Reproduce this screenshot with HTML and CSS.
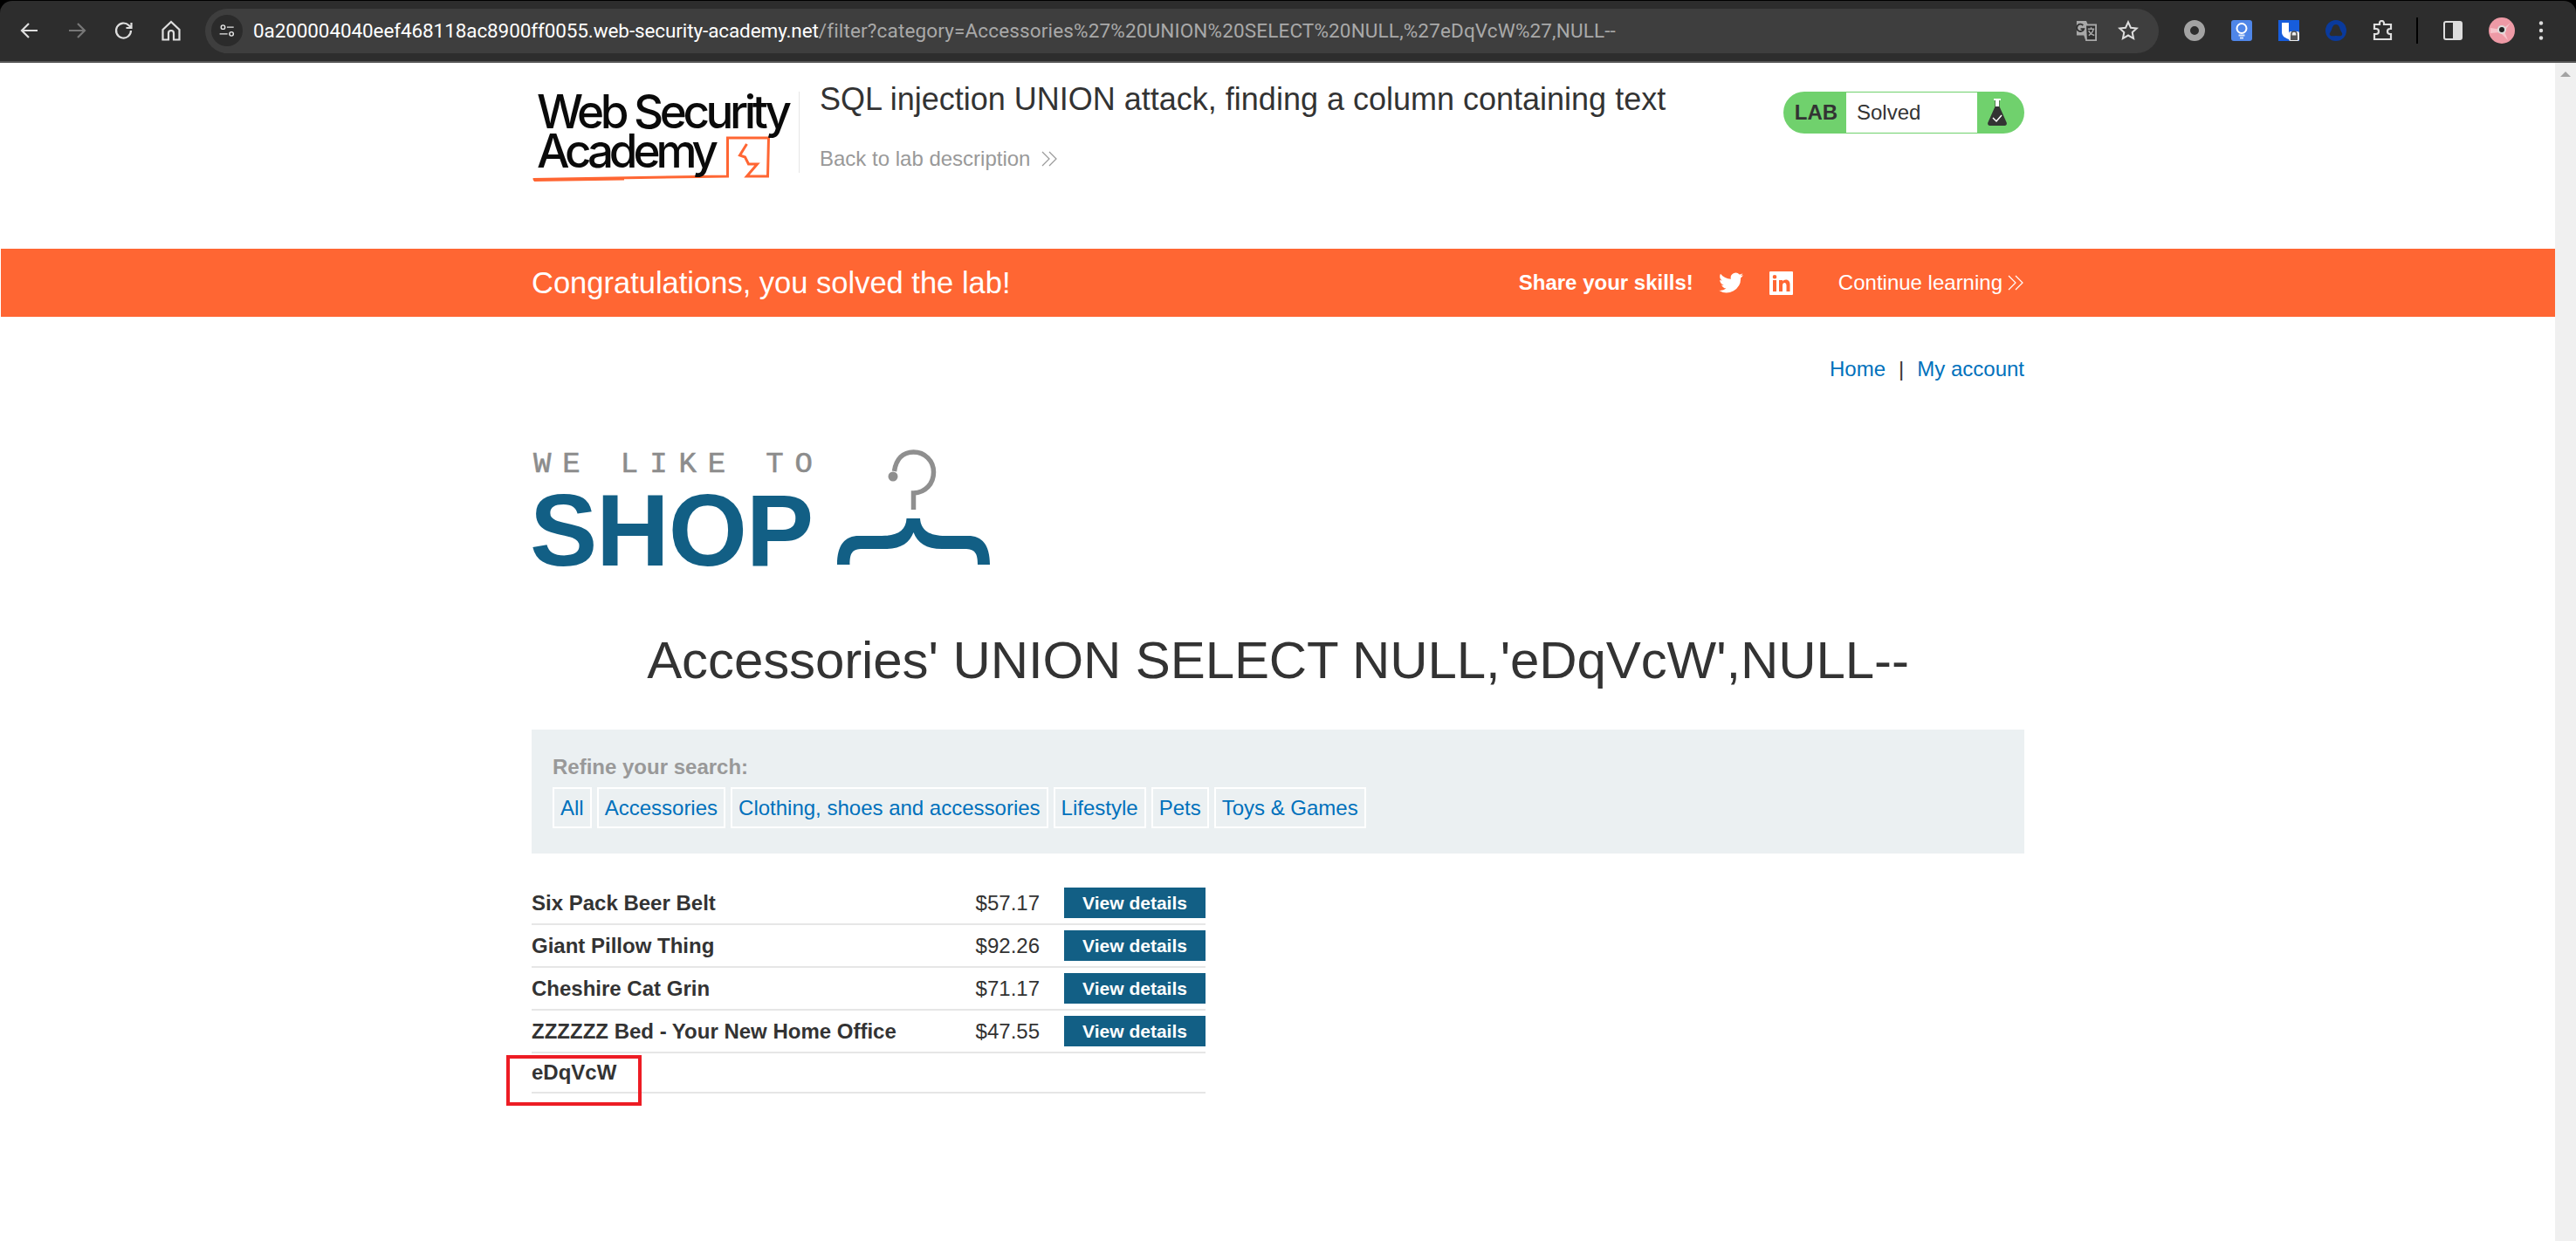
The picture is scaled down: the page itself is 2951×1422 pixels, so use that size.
FILE: index.html
```html
<!DOCTYPE html>
<html lang="en">
<head>
<meta charset="utf-8">
<title>SQL injection UNION attack, finding a column containing text</title>
<link rel="stylesheet" href="styles.css">
</head>
<body>
<div class="toolbar">
  <div class="nav">
    <svg class="nav-icon" viewBox="0 0 24 24"><path d="M21 12H4M11 4l-8 8 8 8" class="st st-light"/></svg>
    <svg class="nav-icon" viewBox="0 0 24 24"><path d="M3 12h17M13 4l8 8-8 8" class="st st-dim"/></svg>
    <svg class="nav-icon" viewBox="0 0 24 24"><path d="M20 12a8.500 8.500 0 1 1-2.500-6L20 8.500M20.500 3v6h-6" class="st st-light"/></svg>
    <svg class="nav-icon" viewBox="0 0 24 24"><path d="M2.500 11L12 2l9.500 9v11.500H15V15a3 3 0 0 0-6 0v7.500H2.500z" class="st st-light"/></svg>
  </div>
  <div class="omnibox">
    <span class="site-info">
      <svg class="site-icon" viewBox="0 0 28 24"><circle cx="7" cy="6" r="3.500" class="st st-bright"/><path d="M14 6h12M1 18h14" class="st st-bright"/><circle cx="22" cy="18" r="3.500" class="st st-bright"/></svg>
    </span>
    <span class="url"><span class="url-host">0a200004040eef468118ac8900ff0055.web-security-academy.net</span><span class="url-path">/filter?category=Accessories%27%20UNION%20SELECT%20NULL,%27eDqVcW%27,NULL--</span></span>
    <svg class="omni-icon" viewBox="0 0 26 26"><path d="M1 1h12l2 5h10v19H12l-2-6H1z" fill="#a8a8a8"/><path d="M12 6h13v19H13z" fill="#2f2f2f" stroke="#a8a8a8" stroke-width="2"/><path d="M15 11h8M19 9v2M22 11c-1 4-4 7-6 8M16 13c1 3 4 5 7 6" fill="none" stroke="#a8a8a8" stroke-width="1.600"/><path d="M9 6.500a4.500 4.500 0 1 0 1 4.500H6" fill="none" stroke="#2f2f2f" stroke-width="2"/></svg>
    <svg class="omni-icon star" viewBox="0 0 26 26"><path d="M13 2.500l3.200 7 7.300.8-5.400 5 1.500 7.500L13 19l-6.600 3.800 1.500-7.500-5.400-5 7.300-.8z" class="st st-light"/></svg>
  </div>
  <div class="extensions">
    <svg class="ext" viewBox="0 0 24 24"><circle cx="12" cy="12" r="8.500" fill="none" stroke="#a3a3a3" stroke-width="7"/></svg>
    <svg class="ext" viewBox="0 0 24 24"><rect width="24" height="24" rx="3" fill="#4f86e8"/><circle cx="12" cy="9.500" r="5.500" fill="none" stroke="#fff" stroke-width="2"/><path d="M8.500 17.500h7M10 20.500h4" stroke="#dce8fb" stroke-width="1.800"/></svg>
    <svg class="ext" viewBox="0 0 24 24"><rect width="24" height="24" fill="#175ddc"/><path d="M4 3h16v11c0 3-2 6-8 8-6-2-8-5-8-8z" fill="#fff"/><path d="M12 3h8v11c0 1-.2 2-.7 3H12z" fill="#175ddc"/><rect x="12" y="13" width="12" height="11" rx="2" fill="#eee"/><path d="M15 18v-2a3 3 0 0 1 6 0v2" fill="none" stroke="#555" stroke-width="1.500"/><rect x="14" y="17.500" width="8" height="5.500" fill="#555"/></svg>
    <svg class="ext" viewBox="0 0 24 24"><circle cx="12" cy="12" r="12" fill="#0a3a9c"/><path d="M12 5c3 0 4 3 5 6s3 4 2 6c-1 2-4 1-7 1s-6 1-7-1 1-3 2-6 2-6 5-6z" fill="#2d2d2d"/></svg>
    <svg class="ext" viewBox="0 0 24 24"><path d="M2 5h6V3.500a2.500 2.500 0 0 1 5 0V5h8v5h-1a3 3 0 0 0 0 6h1v6H2v-6h2a3 3 0 0 0 0-6H2z" class="st st-light"/></svg>
    <span class="divider"></span>
    <svg class="ext side" viewBox="0 0 22 22"><rect x="1" y="1" width="20" height="20" rx="2" fill="none" stroke="#ddd" stroke-width="2"/><rect x="11" y="1" width="10" height="20" fill="#ddd"/></svg>
    <svg class="avatar" viewBox="0 0 30 30"><circle cx="15" cy="15" r="15" fill="#ee9aa6"/><path d="M2 12l13 2 10-8-7 10 4 10-9-9-11 1z" fill="#f7c4cb"/><circle cx="15" cy="14" r="5" fill="#ddd"/><circle cx="15" cy="14" r="3" fill="#222"/></svg>
    <svg class="dots" viewBox="0 0 6 24"><circle cx="3" cy="3.500" r="2.200" fill="#ddd"/><circle cx="3" cy="12" r="2.200" fill="#ddd"/><circle cx="3" cy="20.500" r="2.200" fill="#ddd"/></svg>
  </div>
</div>
<div class="viewport">
  <div class="page">
    <header class="lab-header">
      <div class="wrap lab-row">
        <svg class="academy-logo" viewBox="0 0 300 120" role="img" aria-label="Web Security Academy">
          <path d="M-5 104.500L100 103.500V106.500L-3 108z" class="academy-wedge"/>
          <path d="M-4 105.500L218.500 102V58H265.500L264.500 102H240.500L252.500 88H242.500L238.500 80 232.500 78 240.500 65" class="academy-mark"/>
          <text x="0" y="47" class="academy-text" textLength="292" lengthAdjust="spacing">Web Security</text>
          <text x="0" y="92" class="academy-text" textLength="208" lengthAdjust="spacing">Academy</text>
        </svg>
        <div class="lab-info">
          <h2 class="lab-title">SQL injection UNION attack, finding a column containing text</h2>
          <a class="back-link">Back to lab description<svg class="chev chev-grey" viewBox="0 0 20 20"><path d="M2 2l8 8-8 8M10 2l8 8-8 8"/></svg></a>
        </div>
        <div class="lab-status">
          <span class="lab-label">LAB</span>
          <span class="lab-state">Solved</span>
          <span class="lab-flask">
            <svg class="flask" viewBox="0 0 24 32"><path d="M8 1h8" stroke="#fff" stroke-width="2"/><path d="M9.500 2h5v7l8 18c1 2 0 4-2 4H3.500c-2 0-3-2-2-4l8-18z" fill="#333"/><path d="M10 2h4v7h-4z" fill="#fff"/><path d="M7 22l4 4 6-7" fill="none" stroke="#fff" stroke-width="1.500"/></svg>
          </span>
        </div>
      </div>
    </header>
    <section class="banner">
      <div class="wrap banner-row">
        <p class="banner-msg">Congratulations, you solved the lab!</p>
        <div class="banner-share">
          <strong class="share-text">Share your skills!</strong>
          <svg class="twitter" viewBox="0 0 24 24"><path d="M24 4.600c-.9.400-1.800.7-2.800.8 1-.6 1.800-1.600 2.200-2.700-1 .6-2 1-3.100 1.200A4.900 4.900 0 0 0 11.900 8.400C7.800 8.200 4.200 6.300 1.700 3.200.4 5.500 1.100 8.400 3.200 9.800c-.8 0-1.500-.2-2.200-.6 0 2.300 1.600 4.400 3.900 4.900-.7.200-1.500.2-2.200.1.600 2 2.400 3.400 4.600 3.400A9.900 9.900 0 0 1 0 19.600 14 14 0 0 0 21.500 7.200c1-.7 1.800-1.600 2.500-2.600z"/></svg>
          <svg class="linkedin" viewBox="0 0 27 27"><path fill-rule="evenodd" d="M1 0h25a1 1 0 0 1 1 1v25a1 1 0 0 1-1 1H1a1 1 0 0 1-1-1V1a1 1 0 0 1 1-1zm3 10v13h4V10zm2-6a2.300 2.300 0 1 0 0 4.600A2.300 2.300 0 0 0 6 4zm5 6v13h4v-7c0-4 4.500-4 4.500 0v7h4v-8c0-6.500-6.500-6.500-8.500-3.500V10z"/></svg>
          <a class="continue">Continue learning<svg class="chev chev-white" viewBox="0 0 20 20"><path d="M2 2l8 8-8 8M10 2l8 8-8 8"/></svg></a>
        </div>
      </div>
    </section>
    <main class="wrap shop">
      <nav class="account-nav"><a>Home</a><span class="pipe">|</span><a>My account</a></nav>
      <svg class="shop-logo" viewBox="19 20 540 150" role="img" aria-label="We like to shop">
        <text x="21" y="51" class="logo-small" textLength="320" lengthAdjust="spacing">WE LIKE TO</text>
        <text x="17" y="158" class="logo-big" textLength="325" lengthAdjust="spacing">SHOP</text>
        <path d="M456.500 94V75c14-.5 23-11 23-24 0-13-10-23-23-23-12 0-20 8-22 22" class="hanger-hook"/>
        <circle cx="433" cy="56" r="5.500" class="hanger-dot"/>
        <path d="M448.500 104C448 118 438 124 420 124H394C378 124 369 134 369 157H383.500C383.500 144 386 139 398 139H424C442 139 452 132 456.500 120 461 132 471 139 489 139H515C527 139 530 144 530 157H544C544 134 535 124 519 124H493C475 124 465 118 464 104Z" class="hanger-brace"/>
      </svg>
      <h1 class="category-title">Accessories' UNION SELECT NULL,'eDqVcW',NULL--</h1>
      <section class="filters">
        <div class="filter-label">Refine your search:</div>
        <div class="filter-tags">
          <a class="tag">All</a>
          <a class="tag">Accessories</a>
          <a class="tag">Clothing, shoes and accessories</a>
          <a class="tag">Lifestyle</a>
          <a class="tag">Pets</a>
          <a class="tag">Toys &amp; Games</a>
        </div>
      </section>
      <div class="products">
        <div class="product"><span class="p-name">Six Pack Beer Belt</span><span class="p-price">$57.17</span><a class="p-btn">View details</a></div>
        <div class="product"><span class="p-name">Giant Pillow Thing</span><span class="p-price">$92.26</span><a class="p-btn">View details</a></div>
        <div class="product"><span class="p-name">Cheshire Cat Grin</span><span class="p-price">$71.17</span><a class="p-btn">View details</a></div>
        <div class="product"><span class="p-name">ZZZZZZ Bed - Your New Home Office</span><span class="p-price">$47.55</span><a class="p-btn">View details</a></div>
        <div class="product product-last"><span class="p-name">eDqVcW</span><span class="highlight"></span></div>
      </div>
    </main>
  </div>
  <div class="scrollbar"><span class="scroll-up"></span></div>
</div>
</body>
</html>
```
FILE: styles.css
```css
* { box-sizing: border-box; }
html, body { margin: 0; height: 100%; overflow: hidden; background: #000; }
body { display: flex; flex-direction: column; font-family: "Liberation Sans", Arial, sans-serif; color: #333; }
svg { display: block; flex: none; }

.st { fill: none; stroke-width: 2.200; }
.st-light { stroke: #dedede; }
.st-dim { stroke: #777; }
.st-bright { stroke: #e8e8e8; }

.toolbar { height: 71px; margin-top: 1px; flex: none; display: flex; align-items: center; background: #2d2d2d; border-bottom: 2px solid #565656; border-radius: 14px 14px 0 0; padding-left: 22px; padding-bottom: 1px; }
.nav { display: flex; gap: 30px; align-items: center; }
.nav-icon { width: 24px; height: 24px; }
.omnibox { width: 2238px; height: 51px; margin-left: 27px; background: #3e3e3e; border-radius: 26px; display: flex; align-items: center; padding-left: 7px; padding-right: 23px; }
.site-info { width: 36px; height: 36px; border-radius: 50%; background: #2b2b2b; display: flex; align-items: center; justify-content: center; flex: none; }
.site-icon { width: 18px; height: 16px; }
.url { flex: 1; margin-left: 12px; font-family: Roboto, sans-serif; font-size: 22.500px; white-space: nowrap; }
.url-host { color: #fff; letter-spacing: -0.100px; }
.url-path { color: #a9a9a9; letter-spacing: 0.150px; }
.omni-icon { width: 24px; height: 24px; }
.star { margin-left: 24px; }
.extensions { display: flex; align-items: center; margin-left: 29px; }
.ext { width: 24px; height: 24px; margin-right: 30px; }
.divider { width: 2px; height: 30px; background: #000; margin-left: -4px; margin-right: 29px; }
.side { width: 22px; height: 22px; margin-right: 30px; }
.avatar { width: 30px; height: 30px; }
.dots { width: 6px; height: 24px; margin-left: 27px; }

.viewport { flex: 1; min-height: 0; display: flex; background: #fff; }
.page { flex: 1; min-width: 0; padding-left: 1px; }
.scrollbar { width: 24px; flex: none; background: #f0f0f0; display: flex; justify-content: center; padding-top: 10px; }
.scroll-up { width: 0; height: 0; border-left: 6px solid transparent; border-right: 6px solid transparent; border-bottom: 6px solid #a3a3a3; }
.wrap { width: 1710px; margin: 0 auto; }

.lab-header { height: 213px; }
.lab-row { display: flex; align-items: flex-start; }
.academy-logo { width: 300px; height: 120px; margin: 28px 0 0 6px; overflow: visible; }
.academy-text { font-family: Inter, "Liberation Sans", sans-serif; font-size: 53px; font-weight: 500; fill: #0a0a0a; }
.academy-mark { fill: none; stroke: #ff6633; stroke-width: 3; }
.academy-wedge { fill: #ff6633; }
.lab-info { flex: 1; margin-top: 20px; padding-left: 24px; position: relative; }
.lab-info::before { content: ""; position: absolute; left: 0; top: 13px; width: 1px; height: 93px; background: #e6e6e6; }
.lab-title { margin: 0; font-size: 36px; font-weight: 400; line-height: 44px; color: #333; }
.back-link { display: flex; align-items: center; gap: 12px; margin-top: 30px; font-size: 24px; line-height: 32px; color: #999; }
.chev { width: 20px; height: 20px; fill: none; stroke-width: 1.200; }
.chev-grey { stroke: #999; }
.chev-white { stroke: #fff; }
.lab-status { width: 276px; height: 48px; margin-top: 33px; border-radius: 24px; background: #70d16d; display: flex; align-items: center; }
.lab-label { width: 72px; text-align: center; padding-left: 3px; font-size: 24px; font-weight: 700; color: #333; }
.lab-state { width: 150px; height: 46px; background: #fff; padding-left: 12px; font-size: 24px; line-height: 45px; color: #333; }
.lab-flask { flex: 1; display: flex; justify-content: center; }
.flask { width: 24px; height: 32px; margin-right: 8px; }

.banner { height: 78px; background: #ff6633; color: #fff; }
.banner-row { height: 100%; display: flex; align-items: center; justify-content: space-between; }
.banner-msg { margin: 0; font-size: 34.500px; }
.banner-share { display: flex; align-items: center; }
.share-text { font-size: 24px; }
.twitter { width: 28px; height: 28px; margin-left: 29px; fill: #fff; }
.linkedin { width: 27px; height: 27px; margin-left: 30px; fill: #fff; }
.continue { display: flex; align-items: center; gap: 5px; margin-left: 52px; font-size: 24px; }

.shop { display: flex; flex-direction: column; }
.account-nav { display: flex; justify-content: flex-end; gap: 15px; margin-top: 46px; font-size: 24px; line-height: 28px; color: #0071bc; }
.pipe { color: #333; }
.shop-logo { width: 540px; height: 150px; margin-top: 73px; overflow: visible; }
.logo-small { font-family: "Liberation Mono", monospace; font-size: 34px; fill: #8c8c8c; stroke: #8c8c8c; stroke-width: 0.600; }
.logo-big { font-family: "Liberation Sans", sans-serif; font-size: 116px; font-weight: 700; fill: #125f85; }
.hanger-hook { fill: none; stroke: #8f8f8f; stroke-width: 5.500; }
.hanger-dot { fill: #8f8f8f; }
.hanger-brace { fill: #125f85; }
.category-title { margin: 61px 0 0; text-align: center; font-size: 60px; letter-spacing: -0.100px; font-weight: 400; line-height: 72px; color: #333; }
.filters { height: 142px; margin-top: 43px; background: #ebf0f2; padding: 28px 24px 0 24px; }
.filter-label { font-size: 24px; line-height: 30px; font-weight: 700; color: #999; }
.filter-tags { display: flex; gap: 6px; margin-top: 8px; }
.tag { height: 47px; padding: 0 7px; border: 2px solid #fff; font-size: 24px; line-height: 43px; color: #0071bc; white-space: nowrap; }
.products { width: 772px; margin-top: 33px; }
.product { height: 49px; display: flex; align-items: center; border-bottom: 2px solid #e6e6e6; padding-top: 6px; padding-bottom: 6px; }
.product-last { height: 46px; position: relative; }
.p-name { flex: 1; font-size: 24px; font-weight: 700; color: #333; }
.p-price { font-size: 24px; color: #333; margin-right: 28px; }
.p-btn { width: 162px; height: 35px; background: #125f85; color: #fff; font-size: 21px; font-weight: 700; line-height: 35px; text-align: center; }
.highlight { position: absolute; left: -29px; top: 2px; width: 155px; height: 58px; border: 4px solid #ed1c24; }
```
